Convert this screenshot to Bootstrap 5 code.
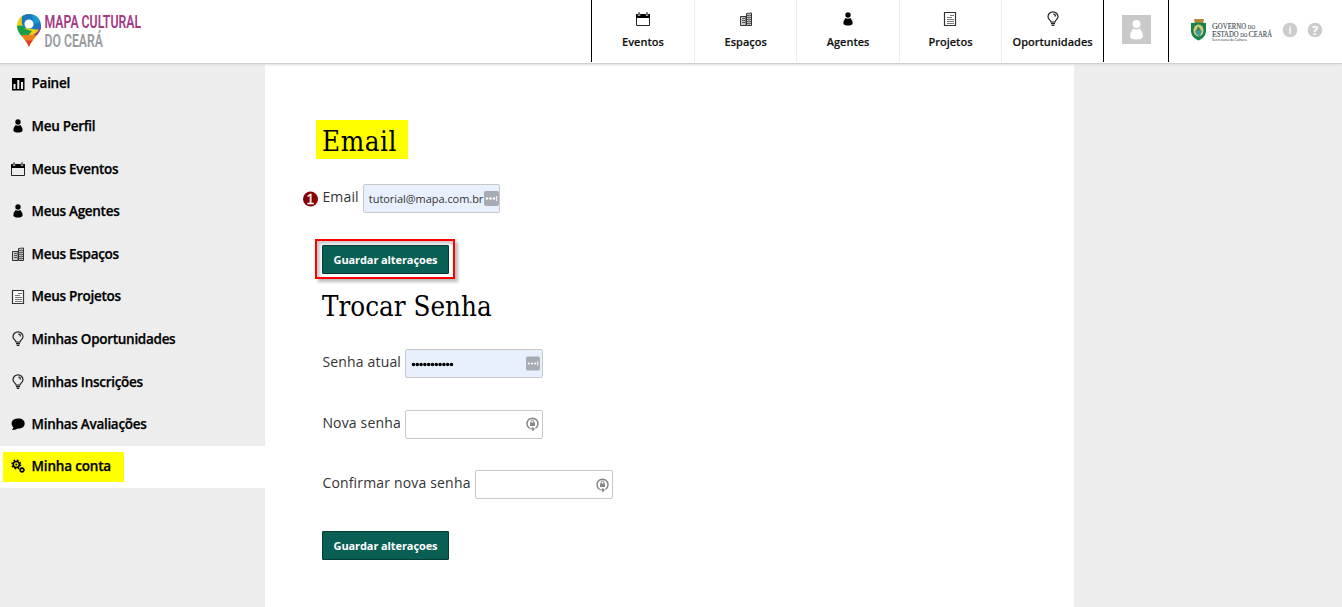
<!DOCTYPE html>
<html lang="pt-BR">
<head>
<meta charset="utf-8">
<meta name="viewport" content="width=device-width, initial-scale=1">
<title>Mapa Cultural do Ceará</title>
<link href="https://cdn.jsdelivr.net/npm/bootstrap@5.3.0/dist/css/bootstrap.min.css" rel="stylesheet">
<style>
body{font-family:"Open Sans",sans-serif;background:#ededed;color:#000;height:607px;overflow:hidden}
.topbar{height:62px;background:#fff;box-shadow:0 1px 0 #fff,0 2px 0 #cfcfcf,0 3px 2px #ddd;z-index:2}
.brand-box{width:591px;padding:12px 0 0 16px}
.main-nav{width:513px;border-left:1px solid #000;border-right:1px solid #000}
.main-nav a{width:102.4px;flex:none;font-size:11px;font-weight:600;line-height:16px;color:#111;text-decoration:none;padding-top:11px;border-right:1px solid #eee;gap:7px;white-space:nowrap;-webkit-text-stroke:.15px #111}
.main-nav a:first-child{width:103px}
.main-nav a:last-child{border:0;width:100.8px}
.user-box{width:65px;border-right:1px solid #000;padding:15px 0 0 18px}
.gov-box{padding:18px 0 0 22px}
svg{display:block;flex:none}
.page{height:545px}
.side{width:265px;padding-top:.6px}
.side a{height:42.6px;padding-left:10px;gap:5.6px;font-size:13.5px;font-weight:600;letter-spacing:-.29px;color:#000;text-decoration:none;white-space:nowrap;-webkit-text-stroke:.25px #000}
.side a:not(.current){padding-bottom:.6px}
.side a.current{background:#fff;padding-left:3px;height:42px}
.side a.current span{background:#ff0;width:121px;height:30px;gap:5.6px;padding:0 0 1px 7px;letter-spacing:-.18px}
.content-pane{width:809px;background:#fff;padding:58px 0 0 57px}
.title{font:400 27.5px/39px "DejaVu Serif Condensed","DejaVu Serif",serif;font-stretch:condensed;margin:0}
.title.marked{background:#ff0;width:92px;height:39px;line-height:42px;letter-spacing:.6px;margin-left:-6px;padding-left:6px}
.title.second{margin-top:8px;margin-bottom:23px}
.field-row{height:29px;gap:4px;font-size:14px;color:#333;white-space:nowrap}
.field-row label{line-height:26px;letter-spacing:.17px;padding-left:.4px}
.first-row{margin:25px 0 26px}
.later-row{margin-top:31.7px}
.entry{width:138px;height:29px;border:1px solid #c8c8c8;border-radius:2px;background:#fff;font-size:11px;color:#333;padding-left:5px;padding-right:2px}
.entry.filled{background:#e8f0fe}
.first-row .entry{width:137px}
.first-row .entry span{letter-spacing:-.05px;padding-top:2px}
.save{width:127px;height:29px;background:#0a5f54;border:1px solid #073a33;border-radius:1px;color:#fff;font-size:11px;font-weight:700;letter-spacing:-.1px;line-height:27px;padding:0;display:block}
.frame{width:140px;height:40px;margin-left:-7px;border:2px solid #f00;padding:4px 0 0 5px;box-shadow:3px 3px 3px #bbb,inset 3px 3px 3px #ccc}
.step{left:-20px;top:7px}
</style>
</head>
<body>
<svg width="0" height="0" class="position-absolute" aria-hidden="true">
<symbol id="calendar" viewBox="0 0 16 16"><path d="M1.500 4h13v10.500h-13z" fill="none" stroke="#222"/><path d="M1 3h14v4H1z"/><path d="M4 1v4M12 1v4" stroke="#ccc" stroke-width="2.400"/><path d="M4 1.500v3M12 1.500v3" stroke="#444" stroke-width="1.400"/></symbol>
<symbol id="building" viewBox="0 0 16 16"><path d="M2.500 5.500H8v9H2.500zM8.500 2.500l5-.5v12.500h-5z" fill="#ccc" stroke="#333"/><path d="M4 7.500h3M4 9.500h3M4 11.500h3M9 4.500h4M9 6.500h4M9 8.500h4M9 10.500h4M9 12.500h4" stroke="#555"/><path d="M11 2v12" stroke="#888"/></symbol>
<symbol id="person" viewBox="0 0 16 16"><circle cx="8" cy="4" r="2.700"/><path d="M5.600 7Q8 8.500 10.400 7q2.300 2.500 2.200 5.500Q12 14.600 8 14.600T3.400 12.500Q3.300 9.500 5.600 7z"/></symbol>
<symbol id="sheet" viewBox="0 0 16 16"><path d="M2.500 1.500h11v13h-11z" fill="#fff" fill-opacity=".5" stroke="#333" stroke-width="1.200"/><path d="M8 4.500h4M5 6.500H10M5 8.500H12M5 10.500H12M5 12.500h7" stroke="#777"/></symbol>
<symbol id="bulb" viewBox="0 0 16 16"><path d="M6 11C6 9 3 8.500 3 5.800a5 5 0 0 1 10 0C13 8.500 10 9 10 11z" fill="none" stroke="#222" stroke-width="1.200"/><path d="M8.500 3q2 .3 2 2.500M6 12.500h4M6.700 14.300h2.600" fill="none" stroke="#222" stroke-width="1.300"/></symbol>
<symbol id="lock" viewBox="0 0 14 16"><path d="M4 12.300A5.500 5.500 0 1 1 10 12.300" fill="none" stroke="#888" stroke-width="1.500"/><path d="M4.500 6.500h5v3.500h-5z" fill="#888"/><path d="M5.700 7V5.300a1.300 1.300 0 0 1 2.600 0V7" fill="none" stroke="#888"/><path d="M4 12.800h3.500M7.200 11.500l1.800 1.500-1.800 1.800z" fill="#888" stroke="#888"/></symbol>
<symbol id="dots" viewBox="0 0 15 15"><rect width="15" height="15" rx="2" fill="#a7abb3"/><circle cx="3" cy="7.500" r="1.200" fill="#fff"/><circle cx="6.500" cy="7.500" r="1.200" fill="#fff"/><circle cx="10" cy="7.500" r="1.200" fill="#fff"/><path d="M12.700 5v5" stroke="#fff"/></symbol>
</svg>

<header class="topbar d-flex position-relative">
  <div class="brand-box flex-shrink-0">
    <svg width="130" height="42" viewBox="0 0 130 42">
      <defs><clipPath id="pin"><path d="M13 2C6 2 1 7 1 14c0 8 8 11 12 21 4-10 12-13 12-21C25 7 20 2 13 2z"/></clipPath></defs>
      <g clip-path="url(#pin)"><path fill="#efcf16" d="M0 0h26v36H0z"/><path d="M7 0q-3 12 1 16l18 2V0z" fill="#1976bf"/><path d="M15 2q8 2 9 8l-5 2z" fill="#1699d5"/><path d="M0 14q8-2 9 3l7 2-5 6H0z" fill="#189c4a"/><path d="M26 8q-1 11-9 15l10 1z" fill="#953386"/><path d="M0 20q6 3 14-1l-3 6H2z" fill="#1fa04a"/><path d="M2 23h22v7H2z" fill="#ec801f"/><path d="M6 28.500h16v9H6z" fill="#e53928"/></g>
      <circle cx="13" cy="12" r="4.600" fill="#fff"/>
      <text x="28.500" y="16" font-family="Roboto,sans-serif" font-size="19" font-weight="600" fill="#a33a84" textLength="96.500" lengthAdjust="spacingAndGlyphs">MAPA CULTURAL</text>
      <text x="28.500" y="35" font-family="Roboto,sans-serif" font-size="19" font-weight="600" fill="#999c9e" textLength="58.500" lengthAdjust="spacingAndGlyphs">DO CEARÁ</text>
    </svg>
  </div>
  <nav class="main-nav d-flex flex-shrink-0">
    <a href="#" class="d-flex flex-column align-items-center"><svg width="16" height="16"><use href="#calendar"/></svg>Eventos</a>
    <a href="#" class="d-flex flex-column align-items-center"><svg width="16" height="16"><use href="#building"/></svg>Espaços</a>
    <a href="#" class="d-flex flex-column align-items-center"><svg width="16" height="16"><use href="#person"/></svg>Agentes</a>
    <a href="#" class="d-flex flex-column align-items-center"><svg width="16" height="16"><use href="#sheet"/></svg>Projetos</a>
    <a href="#" class="d-flex flex-column align-items-center"><svg width="16" height="16"><use href="#bulb"/></svg>Oportunidades</a>
  </nav>
  <div class="user-box flex-shrink-0"><svg width="29" height="29"><path d="M0 0h29v29H0z" fill="#c9c9c9"/><circle cx="14.500" cy="9" r="4" fill="#fff"/><path d="M11 13.500q3.500 2 7 0 3 4 3 8.500-1 2.500-6.500 2.500T8 22q0-4.500 3-8.500z" fill="#fff"/></svg></div>
  <div class="gov-box d-flex">
    <svg width="136" height="26">
      <path d="M3 1h10l-1 5H4z" fill="#b7863b"/><path d="M0 5q8-1 15 0v9q-1 6-7.500 8.500Q1 20 0 14z" fill="#16834b"/><ellipse cx="7.500" cy="12.500" rx="5" ry="6" fill="#d9ca80"/><path d="M4 13q3-3 7 0l-2 5q-4 0-5-5z" fill="#3c9b9d"/><path d="M7 8l3 4-5 1z" fill="#438349"/>
      <g font-family="Liberation Serif,serif" fill="#333f49" stroke="#333f49" stroke-width=".1"><text x="21" y="11" font-size="9" textLength="43" lengthAdjust="spacingAndGlyphs">G<tspan font-size="7.500">OVERNO </tspan><tspan font-size="5.500">DO</tspan></text><text x="21" y="19" font-size="9" textLength="60" lengthAdjust="spacingAndGlyphs">E<tspan font-size="7.500">STADO </tspan><tspan font-size="5.500">DO </tspan>C<tspan font-size="7.500">EARÁ</tspan></text></g>
      <text x="21" y="23" font-family="Open Sans,sans-serif" font-size="4" fill="#333f49" textLength="35">Secretaria da Cultura</text>
      <circle cx="99" cy="12" r="7.300" fill="#ccc"/><text x="99" y="16" text-anchor="middle" font-size="11" font-weight="600" fill="#fff">i</text>
      <circle cx="124" cy="12" r="7.300" fill="#ccc"/><text x="124" y="16.500" text-anchor="middle" font-size="13" font-weight="700" fill="#fff">?</text>
    </svg>
  </div>
</header>

<div class="page d-flex">
  <nav class="side flex-shrink-0">
    <a href="#" class="d-flex align-items-center"><svg width="16" height="16"><path d="M2 2h12.500v12.500H2z"/><path d="M3.500 8h2v5h-2zM7.300 4h2v9h-2zM11 6h2v7h-2z" fill="#eee"/></svg>Painel</a>
    <a href="#" class="d-flex align-items-center"><svg width="16" height="16"><use href="#person"/></svg>Meu Perfil</a>
    <a href="#" class="d-flex align-items-center"><svg width="16" height="16"><use href="#calendar"/></svg>Meus Eventos</a>
    <a href="#" class="d-flex align-items-center"><svg width="16" height="16"><use href="#person"/></svg>Meus Agentes</a>
    <a href="#" class="d-flex align-items-center"><svg width="16" height="16"><use href="#building"/></svg>Meus Espaços</a>
    <a href="#" class="d-flex align-items-center"><svg width="16" height="16"><use href="#sheet"/></svg>Meus Projetos</a>
    <a href="#" class="d-flex align-items-center"><svg width="16" height="16"><use href="#bulb"/></svg>Minhas Oportunidades</a>
    <a href="#" class="d-flex align-items-center"><svg width="16" height="16"><use href="#bulb"/></svg>Minhas Inscrições</a>
    <a href="#" class="d-flex align-items-center"><svg width="16" height="16"><path d="M8.300 2.500c4 0 6.400 2 6.400 5s-2.400 5-6.700 5l-3 1.300-3 .1 1.500-2.500C.2 8.500.8 2.500 8.300 2.500z"/></svg>Minhas Avaliações</a>
    <a href="#" class="current d-flex align-items-center"><span class="d-flex align-items-center"><svg width="16" height="16"><circle cx="6.300" cy="6.500" r="3" fill="none" stroke="#000" stroke-width="1.600"/><circle cx="6.300" cy="6.500" r="4.300" fill="none" stroke="#000" stroke-width="1.500" stroke-dasharray="1.700 1.680"/><circle cx="6.300" cy="6.500" r="1"/><circle cx="12" cy="12" r="1.700" fill="none" stroke="#000" stroke-width="1.400"/><circle cx="12" cy="12" r="2.500" fill="none" stroke="#000" stroke-dasharray="1.200 .76"/></svg>Minha conta</span></a>
  </nav>
  <main class="content-pane flex-shrink-0">
    <h1 class="title marked">Email</h1>
    <div class="field-row first-row d-flex position-relative">
      <svg class="step position-absolute" width="16" height="16"><circle cx="8.500" cy="8" r="7.500" fill="#850000"/><text x="8.500" y="13" text-anchor="middle" font-family="Liberation Sans,sans-serif" font-size="14" fill="#fff" stroke="#fff" stroke-width=".3">1</text></svg>
      <label>Email</label>
      <div class="entry filled d-flex align-items-center justify-content-between pe-0"><span>tutorial@mapa.com.br</span><svg width="15" height="15"><use href="#dots"/></svg></div>
    </div>
    <div class="frame"><button class="save">Guardar alteraçoes</button></div>
    <h2 class="title second">Trocar Senha</h2>
    <div class="field-row d-flex"><label>Senha atual</label><div class="entry filled d-flex align-items-center justify-content-between"><svg width="44" height="8"><path d="M2.500 4.500H42" stroke="#000" stroke-width="3.600" stroke-linecap="round" stroke-dasharray="0 3.800"/></svg><svg width="14" height="15"><use href="#dots"/></svg></div></div>
    <div class="field-row later-row d-flex"><label>Nova senha</label><div class="entry d-flex align-items-center justify-content-end"><svg width="15" height="16"><use href="#lock"/></svg></div></div>
    <div class="field-row later-row d-flex"><label>Confirmar nova senha</label><div class="entry d-flex align-items-center justify-content-end"><svg width="15" height="16"><use href="#lock"/></svg></div></div>
    <button class="save later-row">Guardar alteraçoes</button>
  </main>
</div>
<script src="https://cdn.jsdelivr.net/npm/bootstrap@5.3.0/dist/js/bootstrap.bundle.min.js"></script>
</body>
</html>
